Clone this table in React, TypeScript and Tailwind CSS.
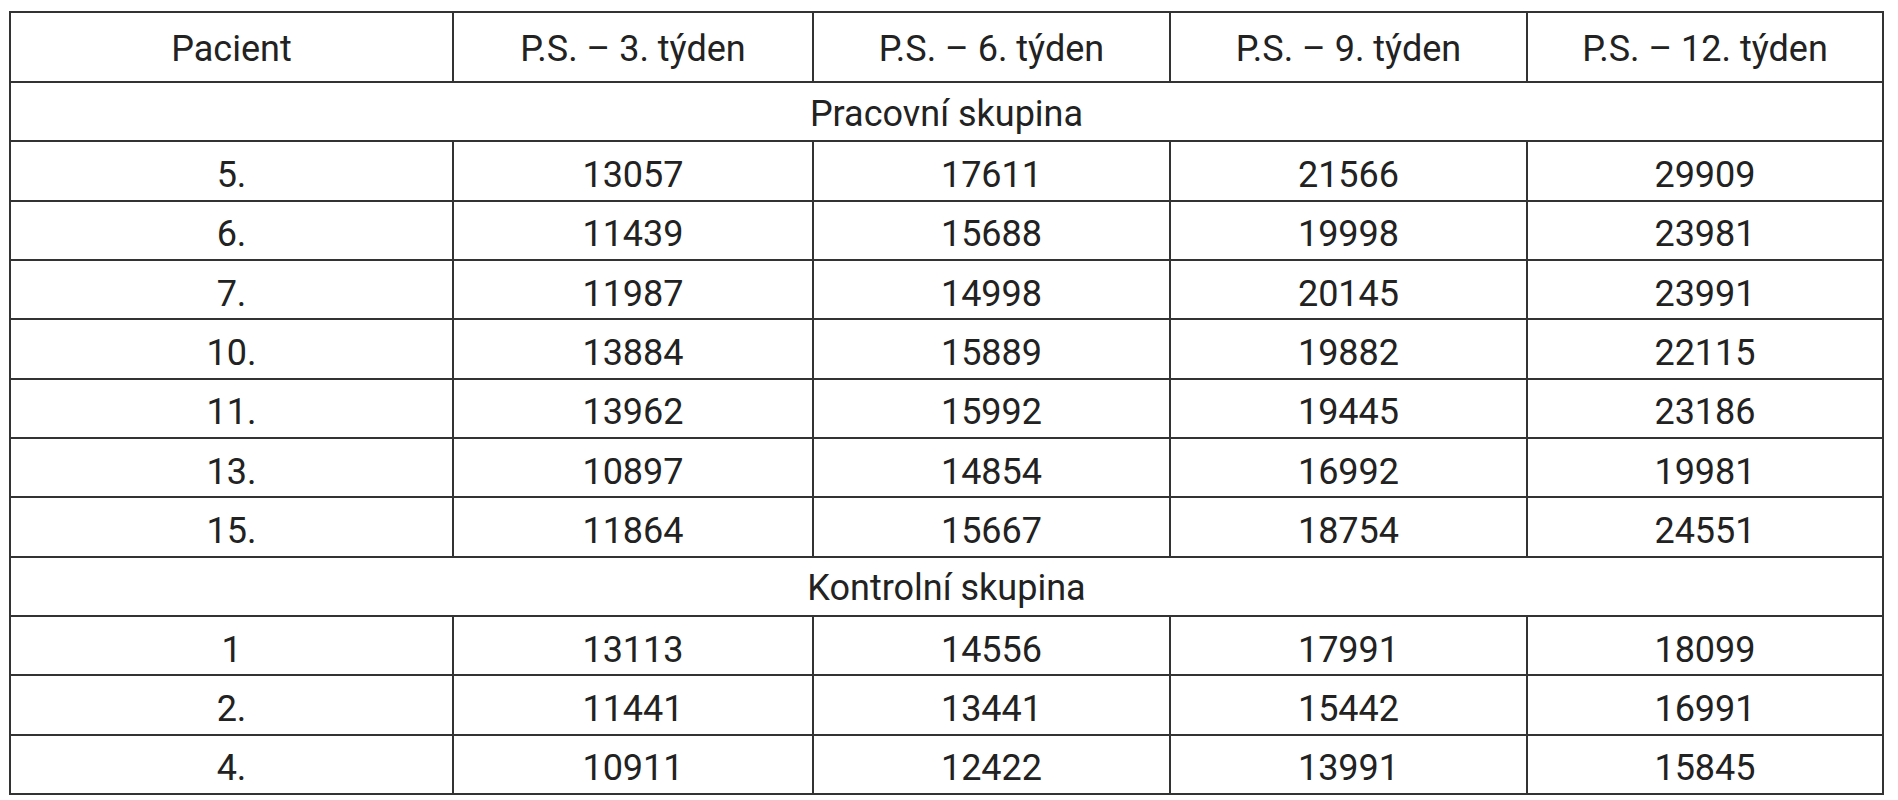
const COLS = ['w-[443px]', 'w-[360px]', 'w-[357px]', 'w-[357px]', 'flex-1'];

const HEAD = ['Pacient', 'P.S. – 3. týden', 'P.S. – 6. týden', 'P.S. – 9. týden', 'P.S. – 12. týden'];

type Row = string[];

const WORK: Row[] = [
  ['5.', '13057', '17611', '21566', '29909'],
  ['6.', '11439', '15688', '19998', '23981'],
  ['7.', '11987', '14998', '20145', '23991'],
  ['10.', '13884', '15889', '19882', '22115'],
  ['11.', '13962', '15992', '19445', '23186'],
  ['13.', '10897', '14854', '16992', '19981'],
  ['15.', '11864', '15667', '18754', '24551'],
];

const CONTROL: Row[] = [
  ['1', '13113', '14556', '17991', '18099'],
  ['2.', '11441', '13441', '15442', '16991'],
  ['4.', '10911', '12422', '13991', '15845'],
];

function Cells({ cells, header }: { cells: string[]; header?: boolean }) {
  return (
    <div className={header ? 'flex h-[70px]' : 'flex h-[59.33px]'}>
      {cells.map((c, i) => (
        <div
          key={i}
          className={`${COLS[i]} flex items-center justify-center border-r-2 border-b-2 border-[#333] ${header ? 'pt-[4px]' : 'pt-[8px]'}`}
        >
          {c}
        </div>
      ))}
    </div>
  );
}

function Group({ label }: { label: string }) {
  return (
    <div className="flex h-[59.33px] items-center justify-center border-r-2 border-b-2 border-[#333] pt-[4px]">
      {label}
    </div>
  );
}

export default function App() {
  return (
    <div className="min-h-[800px] bg-white pt-[11px] pl-[9px] font-['Roboto',sans-serif] text-[36px] leading-none text-[#222]">
      <div className="w-[1875px] border-t-2 border-l-2 border-[#333]">
        <Cells cells={HEAD} header />
        <Group label="Pracovní skupina" />
        {WORK.map((r) => (
          <Cells key={r[0]} cells={r} />
        ))}
        <Group label="Kontrolní skupina" />
        {CONTROL.map((r) => (
          <Cells key={r[0]} cells={r} />
        ))}
      </div>
    </div>
  );
}
